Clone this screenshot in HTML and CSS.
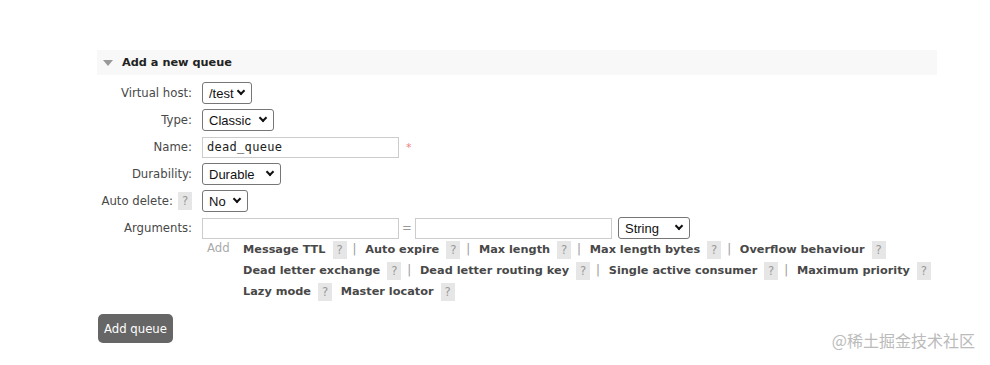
FILE: index.html
```html
<!DOCTYPE html>
<html lang="en">
<head>
<meta charset="UTF-8">
<link rel="stylesheet" href="styles.css">
<title>Add a new queue</title>
</head>
<body>
<div class="section">
<h2 class="section-title"><span class="arrow"></span>Add a new queue</h2>
<div class="form">
<label class="lbl">Virtual host:</label>
<div class="ctl"><span class="sel-wrap"><select class="sel w-vhost"><option>/test</option></select></span></div>
<label class="lbl">Type:</label>
<div class="ctl"><span class="sel-wrap"><select class="sel w-type"><option>Classic</option></select></span></div>
<label class="lbl">Name:</label>
<div class="ctl"><input class="txt mono" type="text" value="dead_queue"><span class="req">*</span></div>
<label class="lbl">Durability:</label>
<div class="ctl"><span class="sel-wrap"><select class="sel w-dur"><option>Durable</option></select></span></div>
<label class="lbl">Auto delete: <span class="help">?</span></label>
<div class="ctl"><span class="sel-wrap"><select class="sel w-no"><option>No</option></select></span></div>
<label class="lbl">Arguments:</label>
<div class="ctl">
<input class="txt" type="text"><span class="eq">=</span><input class="txt" type="text"><span class="sel-wrap str"><select class="sel w-str"><option>String</option></select></span>
</div>
<div></div>
<div class="args">
<span class="add">Add</span>
<div class="arg-links">
<span class="al">Message TTL</span><span class="help">?</span><span class="sep">|</span>
<span class="al">Auto expire</span><span class="help">?</span><span class="sep">|</span>
<span class="al">Max length</span><span class="help">?</span><span class="sep">|</span>
<span class="al">Max length bytes</span><span class="help">?</span><span class="sep">|</span>
<span class="al">Overflow behaviour</span><span class="help">?</span><br>
<span class="al">Dead letter exchange</span><span class="help">?</span><span class="sep">|</span>
<span class="al">Dead letter routing key</span><span class="help">?</span><span class="sep">|</span>
<span class="al">Single active consumer</span><span class="help">?</span><span class="sep">|</span>
<span class="al">Maximum priority</span><span class="help">?</span><br>
<span class="al">Lazy mode</span><span class="help">?</span>
<span class="al">Master locator</span><span class="help">?</span>
</div>
</div>
</div>
<button class="btn">Add queue</button>
</div>
<div class="watermark">@稀土掘金技术社区</div>
</body>
</html>
```

FILE: styles.css
```css
html,
body {
height: 100%;
margin: 0;
overflow: hidden;
background: #fff;
}
body {
font-family: "DejaVu Sans", Verdana, sans-serif;
font-size: 11.7px;
color: #484848;
}
.section {
margin: 50px 53px 0 97px;
}
.section-title {
display: flex;
align-items: center;
height: 25px;
margin: 0;
padding-left: 6px;
background: #f8f8f8;
font-size: 11.3px;
font-weight: bold;
color: #222;
}
.arrow {
width: 0;
height: 0;
margin-right: 9px;
border-left: 5px solid transparent;
border-right: 5px solid transparent;
border-top: 6px solid #999;
}
.form {
display: grid;
grid-template-columns: 95px 1fr;
column-gap: 10px;
row-gap: 5px;
margin-top: 7px;
}
.lbl {
display: flex;
align-items: center;
justify-content: flex-end;
height: 22px;
color: #484848;
white-space: nowrap;
}
.ctl {
display: flex;
align-items: center;
height: 22px;
}
.sel-wrap {
position: relative;
display: inline-block;
height: 22px;
}
.sel-wrap::after {
content: "";
position: absolute;
right: 8px;
top: 6px;
width: 4px;
height: 4px;
border-right: 2px solid #111;
border-bottom: 2px solid #111;
transform: rotate(45deg);
pointer-events: none;
}
.sel-wrap.str {
margin-left: 6px;
}
.sel {
box-sizing: border-box;
height: 22px;
padding: 0 0 0 6px;
border: 1px solid #767676;
border-radius: 3px;
background: #fff;
font-family: "Liberation Sans", Arial, sans-serif;
font-size: 13px;
color: #111;
-webkit-appearance: none;
appearance: none;
}
.w-vhost { width: 50px; }
.w-type { width: 72px; }
.w-dur { width: 79px; }
.w-no { width: 46px; }
.w-str { width: 72px; }
.txt {
box-sizing: border-box;
width: 197px;
height: 21px;
padding: 0 4px;
border: 1px solid #ccc;
font-size: 12px;
color: #222;
}
.mono {
font-family: "DejaVu Sans Mono", monospace;
letter-spacing: 0.3px;
}
.req {
margin-left: 7px;
color: #f08080;
font-size: 11px;
}
.eq {
width: 16px;
text-align: center;
color: #999;
}
.help {
display: inline-block;
width: 14px;
height: 18px;
line-height: 18px;
margin: 0 5px 0 7px;
background: #e6e6e6;
color: #999;
font-size: 11.7px;
font-weight: normal;
text-align: center;
vertical-align: middle;
}
.lbl .help {
margin: 0 0 0 5px;
}
.args {
display: flex;
align-items: flex-start;
margin-top: -2px;
}
.add {
width: 41px;
padding-left: 5px;
box-sizing: border-box;
color: #aaa;
line-height: 16px;
margin-top: -2px;
}
.arg-links {
line-height: 21px;
margin-top: -3px;
}
.al {
font-size: 11.3px;
font-weight: bold;
color: #484848;
}
.sep {
color: #999;
margin: 0 5px 0 1px;
}
.btn {
display: block;
margin-top: 12px;
margin-left: 1px;
height: 29px;
padding: 0 6px;
border: 0;
border-radius: 5px;
background: #666;
color: #fff;
font-family: "DejaVu Sans", Verdana, sans-serif;
font-size: 11.7px;
}
.watermark {
position: absolute;
right: 15px;
bottom: 13px;
font-family: "Noto Sans CJK SC", sans-serif;
font-size: 16px;
color: #bbb;
}
```
